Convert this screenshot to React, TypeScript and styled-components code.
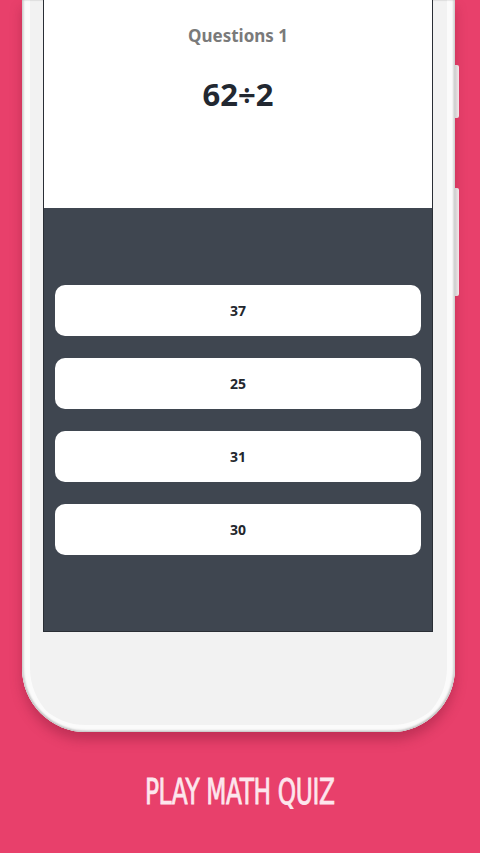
import React from 'react';
import styled, {createGlobalStyle} from 'styled-components';

const GlobalStyle = createGlobalStyle`
	html, body {
		margin: 0;
		padding: 0;
		background: #e8406b;
	}
	* {
		box-sizing: border-box;
	}
`;

const Page = styled.div`
	width: 480px;
	height: 853px;
	background: #e8406b;
	display: flex;
	flex-direction: column;
	overflow: hidden;
`;

const Phone = styled.div`
	position: relative;
	margin-left: 22px;
	width: 433px;
	height: 732px;
	flex-shrink: 0;
	padding: 0 22px 0 21px;
	background: #f2f2f2;
	border-radius: 0 0 64px 64px;
	box-shadow:
		inset 2px 0 2px rgba(0, 0, 0, 0.14),
		inset -2px 0 2px rgba(0, 0, 0, 0.14),
		inset 0 -2px 2px rgba(0, 0, 0, 0.12),
		inset 8px 0 0 #fbfbfb,
		inset -8px 0 0 #fbfbfb,
		inset 0 -7px 0 #fbfbfb,
		0 8px 12px rgba(120, 20, 50, 0.35);
`;

const SideButton = styled.div<{$top: number; $height: number}>`
	position: absolute;
	right: -4px;
	top: ${(p) => p.$top}px;
	width: 4px;
	height: ${(p) => p.$height}px;
	background: linear-gradient(90deg, #cfcfcf, #f6e6ea);
	border-radius: 0 2px 2px 0;
`;

const Screen = styled.div`
	height: 632px;
	display: flex;
	flex-direction: column;
	border: 1px solid #2a2e35;
	border-top: none;
	font-family: 'Noto Sans', 'Open Sans', sans-serif;
`;

const QuestionArea = styled.div`
	height: 208px;
	background: #ffffff;
	display: flex;
	flex-direction: column;
	align-items: center;
	padding-top: 24px;
`;

const QuestionLabel = styled.div`
	font-size: 17px;
	font-weight: 700;
	color: #7a7a7a;
	line-height: 24px;
`;

const Expression = styled.div`
	margin-top: 26px;
	font-size: 31px;
	font-weight: 700;
	color: #222831;
	line-height: 40px;
`;

const AnswerArea = styled.div`
	flex: 1;
	background: #3f4650;
	display: flex;
	flex-direction: column;
	justify-content: center;
	gap: 22px;
	padding: 0 11px;
`;

const AnswerButton = styled.div`
	height: 51px;
	background: #ffffff;
	border-radius: 10px;
	display: flex;
	align-items: center;
	justify-content: center;
	font-size: 14px;
	font-weight: 700;
	color: #23272d;
`;

const Caption = styled.div`
	flex: 1;
	display: flex;
	align-items: center;
	justify-content: center;
	padding-bottom: 2px;
`;

const CaptionText = styled.div`
	font-family: 'Liberation Sans Narrow', 'DejaVu Sans Condensed', 'Liberation Sans', sans-serif;
	font-size: 36px;
	font-weight: 400;
	color: #fde6ed;
	-webkit-text-stroke: 0.8px #fde6ed;
	letter-spacing: -0.5px;
	transform: scaleX(0.72);
`;

const answers = ['37', '25', '31', '30'];

export default function App() {
	return (
		<Page>
			<GlobalStyle />
			<Phone>
				<SideButton $top={65} $height={53} />
				<SideButton $top={188} $height={108} />
				<Screen>
					<QuestionArea>
						<QuestionLabel>Questions 1</QuestionLabel>
						<Expression>62÷2</Expression>
					</QuestionArea>
					<AnswerArea>
						{answers.map((a) => (
							<AnswerButton key={a}>{a}</AnswerButton>
						))}
					</AnswerArea>
				</Screen>
			</Phone>
			<Caption>
				<CaptionText>PLAY MATH QUIZ</CaptionText>
			</Caption>
		</Page>
	);
}
